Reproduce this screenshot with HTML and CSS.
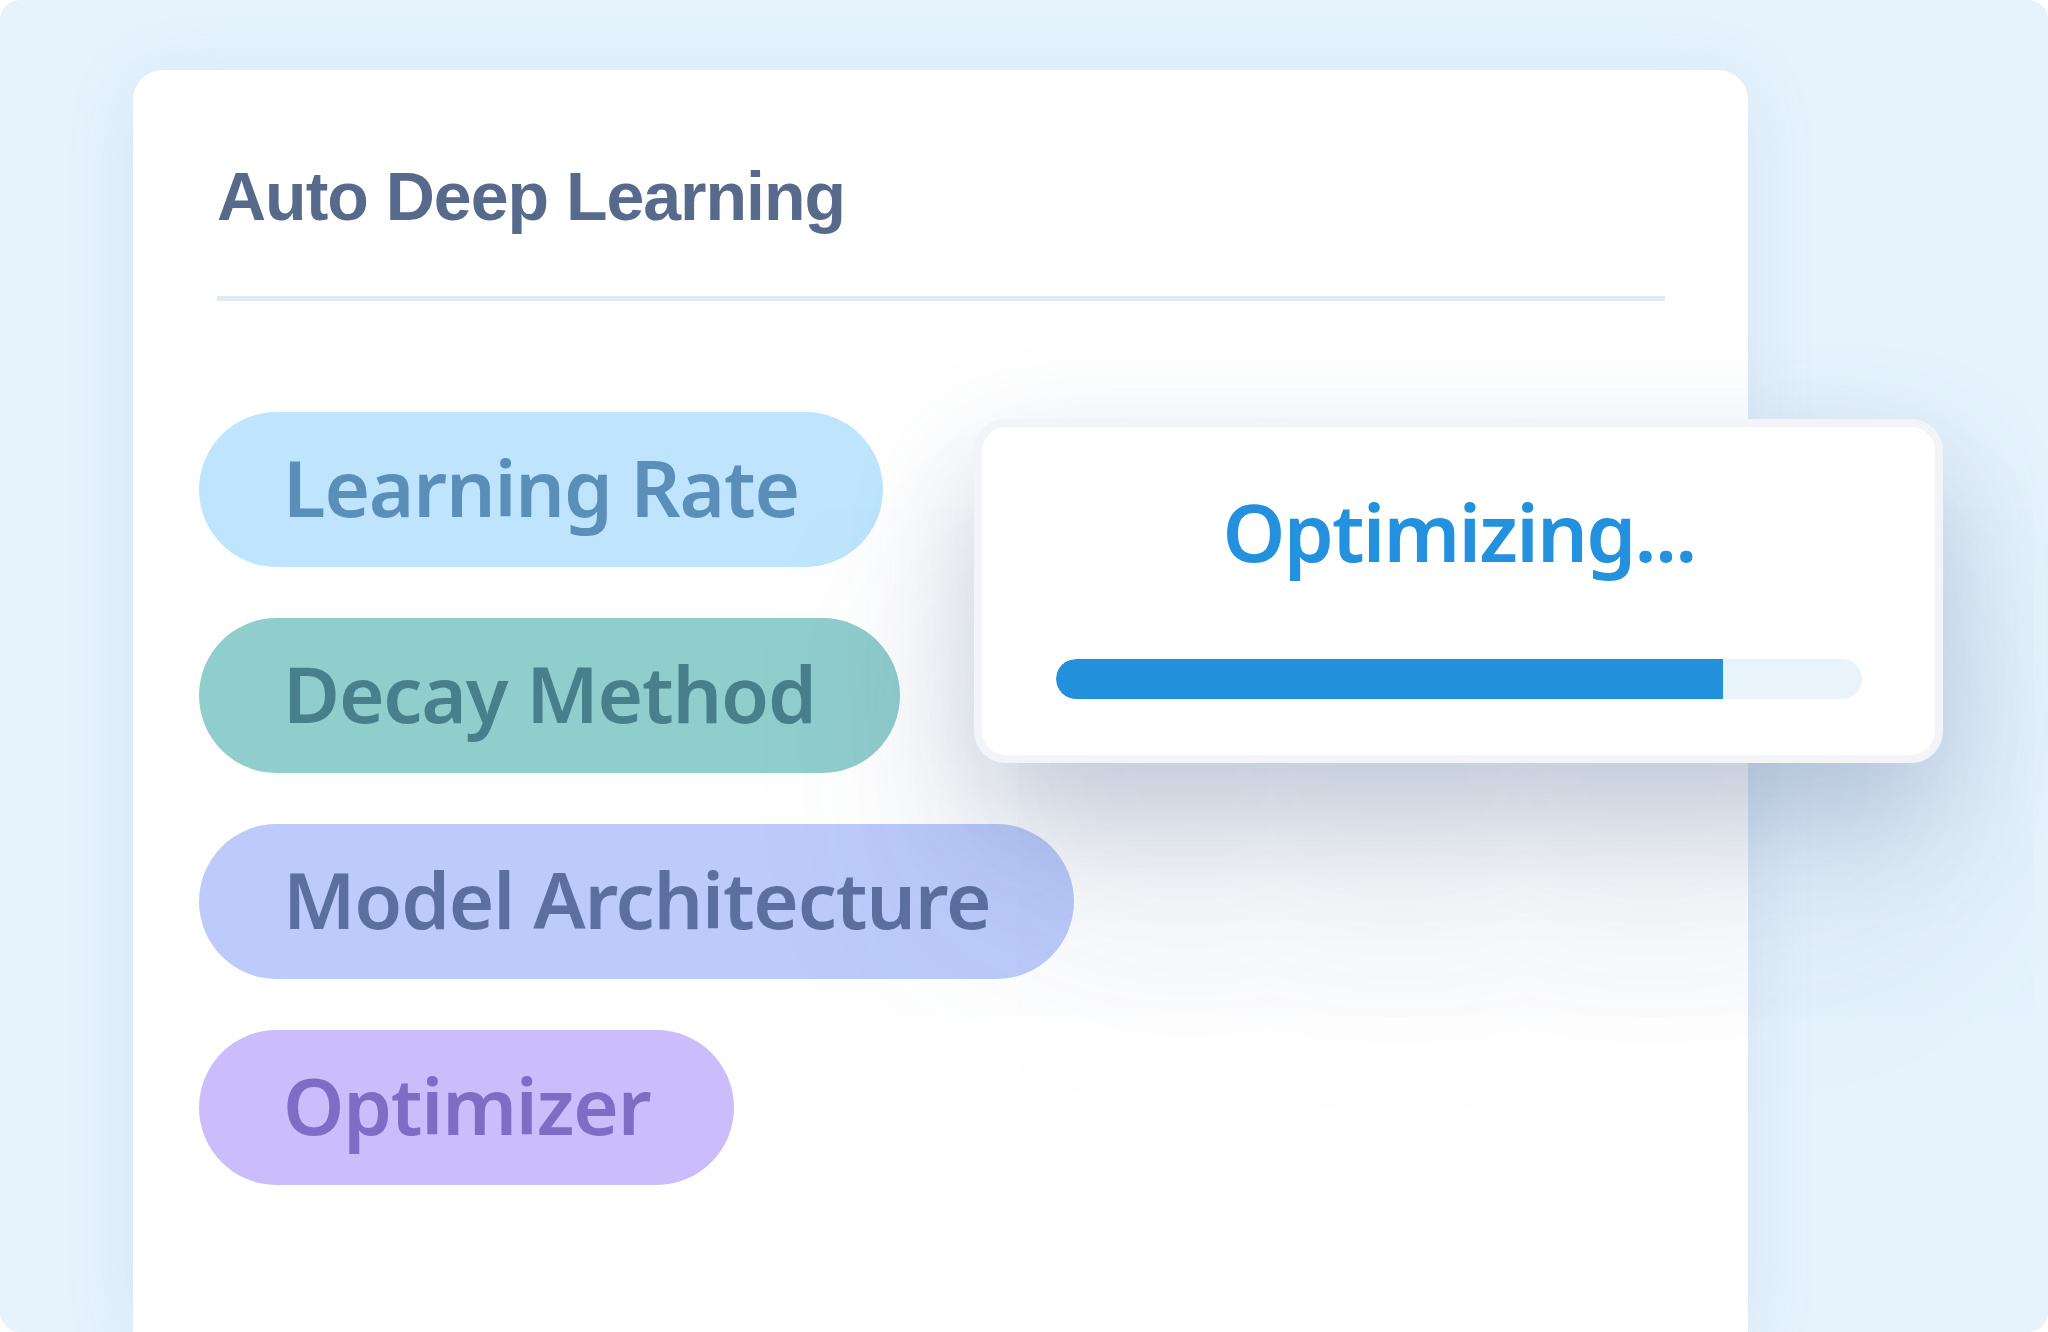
FILE: index.html
```html
<!DOCTYPE html>
<html lang="en">
<head>
<meta charset="utf-8">
<title>Auto Deep Learning</title>
<link rel="stylesheet" href="styles.css">
</head>
<body>
<div class="frame">
  <section class="card">
    <h1 class="title">Auto Deep Learning</h1>
    <div class="divider"></div>
    <ul class="pills">
      <li class="pill pill-lr">Learning Rate</li>
      <li class="pill pill-decay">Decay Method</li>
      <li class="pill pill-model">Model Architecture</li>
      <li class="pill pill-opt">Optimizer</li>
    </ul>
  </section>
  <div class="popup">
    <div class="popup-text">Optimizing...</div>
    <div class="progress"><div class="progress-fill" style="width: 82.75%"></div></div>
  </div>
</div>
</body>
</html>
```

FILE: styles.css
```css
* { box-sizing: border-box; }
html, body { margin: 0; padding: 0; background: #ffffff; }
body { width: 2048px; height: 1332px; overflow: hidden; }

.frame {
  position: relative;
  width: 2048px;
  height: 1332px;
  border-radius: 20px;
  background: #e6f3fd;
  overflow: hidden;
  padding: 70px 0 0 133px;
}

.card {
  width: 1615px;
  height: 1262px;
  background: #ffffff;
  border-radius: 30px 30px 0 0;
  box-shadow: 0 10px 70px rgba(110, 145, 190, 0.14);
  padding: 87px 83px 0 84px;
}

.title {
  margin: 0;
  font-family: "Liberation Sans", Arial, sans-serif;
  font-weight: 700;
  font-size: 68px;
  line-height: 78px;
  color: #586a8b;
  letter-spacing: -1px;
}

.divider {
  margin-top: 61px;
  height: 5px;
  background: #e1eaf3;
}

.pills {
  list-style: none;
  margin: 111px 0 0 -18px;
  padding: 0;
  display: flex;
  flex-direction: column;
  align-items: flex-start;
  gap: 51px;
}

.pill {
  height: 155px;
  border-radius: 78px;
  padding: 0 84px 6px;
  display: flex;
  align-items: center;
  font-family: "Noto Sans", "Lato", sans-serif;
  font-weight: 600;
  font-size: 78px;
  letter-spacing: -1.2px;
  line-height: 1;
  white-space: nowrap;
  font-variant-ligatures: none;
}

.pill-lr { background: #bee5fd; color: #5b8fba; }
.pill-decay { background: #90cdcd; color: #477f8a; }
.pill-model { background: #bccbfb; color: #5d6fa0; }
.pill-opt { background: #cbbdfc; color: #7d6dc4; }

.popup {
  position: absolute;
  left: 974px;
  top: 419px;
  width: 969px;
  height: 344px;
  background: #ffffff;
  border: 8px solid #f2f4f7;
  border-radius: 32px;
  box-shadow:
    0 50px 120px rgba(70, 95, 140, 0.28),
    0 160px 260px rgba(70, 95, 140, 0.12);
  display: flex;
  flex-direction: column;
  align-items: center;
  padding: 64px 73px 0 74px;
}

.popup-text {
  font-family: "Noto Sans", "Lato", sans-serif;
  font-weight: 600;
  font-size: 80px;
  letter-spacing: -1.8px;
  line-height: 1;
  color: #2391dd;
  font-variant-ligatures: none;
}

.progress {
  margin-top: 88px;
  width: 100%;
  height: 40px;
  border-radius: 20px;
  background: #e8f3fc;
  overflow: hidden;
}

.progress-fill {
  height: 100%;
  background: #2390dc;
  border-radius: 20px 0 0 20px;
}
```
